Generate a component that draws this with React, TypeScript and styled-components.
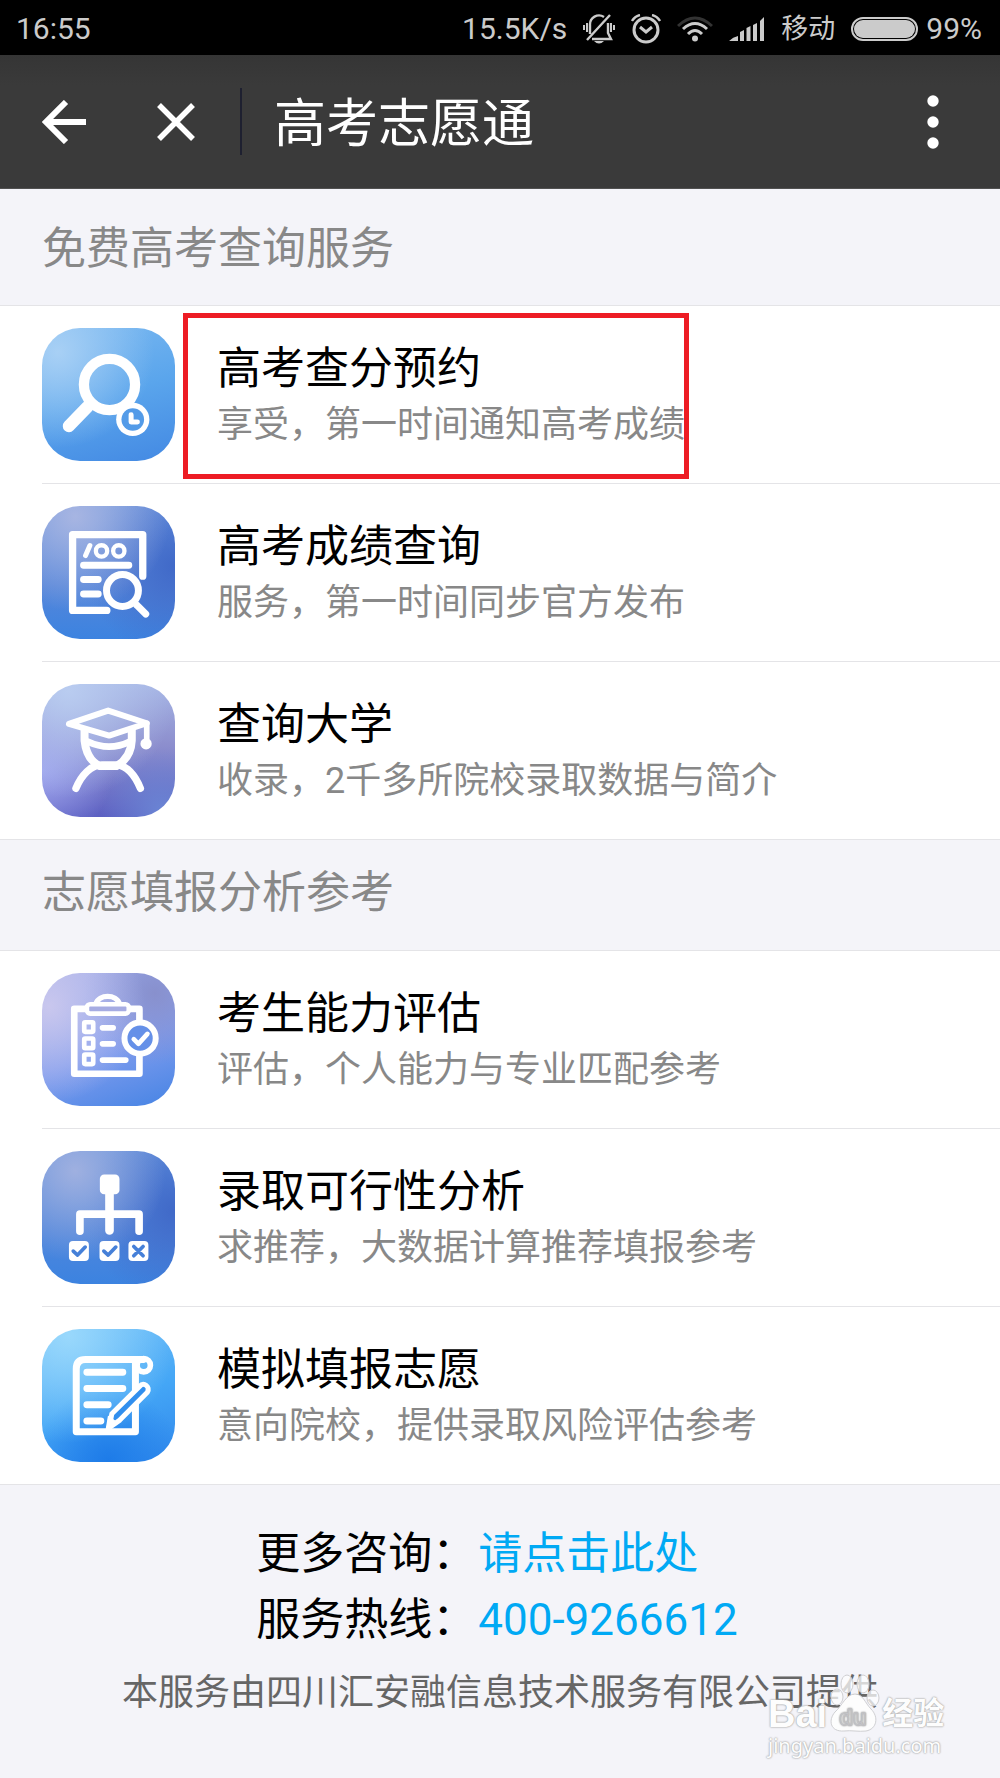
import React from 'react';
import styled, { createGlobalStyle } from 'styled-components';

const GlobalStyle = createGlobalStyle`
  *, *::before, *::after { box-sizing: border-box; }
  body {
    margin: 0;
    background: #f4f4f9;
    color: #000;
    font-family: Roboto, "Noto Sans CJK SC", sans-serif;
  }
  a { color: inherit; text-decoration: none; }
`;

const Page = styled.div`
  position: relative;
  min-height: 100vh;
`;

/* ---------- status bar ---------- */

const StatusBar = styled.div`
  display: flex;
  align-items: center;
  justify-content: space-between;
  height: 55px;
  padding: 2px 18px 0 16px;
  background: #000;
  color: #cbcbcb;
  font-size: 30px;
  line-height: 40px;
`;

const StatusGroup = styled.div`
  display: flex;
  align-items: center;
  gap: 16px;
  svg { display: block; }
`;

const Carrier = styled.span`
  font-size: 27px;
`;

const Battery = styled.div`
  display: flex;
  align-items: center;
  gap: 8px;
`;

const BatteryShell = styled.span`
  width: 67px;
  height: 24px;
  padding: 1px;
  border: 2px solid #cbcbcb;
  border-radius: 12px;
`;

const BatteryLevel = styled.span`
  display: block;
  height: 100%;
  border-radius: 9px;
  background: #cbcbcb;
`;

/* ---------- title bar ---------- */

const TitleBar = styled.header`
  display: flex;
  align-items: center;
  height: 134px;
  padding: 0 42px;
  background: linear-gradient(#353535, #3a3a3a 30px);
  border-bottom: 1px solid #515151;
  color: #fff;
`;

const IconButton = styled.button<{ $space?: number }>`
  display: flex;
  padding: 0;
  margin-right: ${(p) => p.$space ?? 0}px;
  border: 0;
  background: none;
  color: inherit;
  cursor: pointer;
`;

const Divider = styled.span`
  width: 2px;
  height: 67px;
  margin-right: 32px;
  background: #1e2030;
`;

const PageTitle = styled.h1`
  flex: 1;
  margin: 0;
  padding-top: 6px;
  font-size: 52px;
  line-height: 72px;
  font-weight: 400;
`;

/* ---------- lists ---------- */

const SectionTitle = styled.h2<{ $top: number; $bottom: number }>`
  margin: 0;
  padding: ${(p) => p.$top}px 42px ${(p) => p.$bottom}px;
  border-bottom: 1px solid #e4e4e7;
  color: #888;
  font-size: 44px;
  line-height: 60px;
  font-weight: 400;
`;

const List = styled.ul`
  margin: 0;
  padding: 0 0 0 42px;
  list-style: none;
  background: #fff;
  border-bottom: 1px solid #e4e4e7;
`;

const Item = styled.li`
  position: relative;
  & + & { border-top: 1px solid #e4e4e7; }
`;

const ItemLink = styled.a`
  display: flex;
  align-items: center;
  gap: 42px;
  padding: 22px 0;
`;

const Tile = styled.span<{ $bg: string }>`
  flex: none;
  width: 133px;
  height: 133px;
  border-radius: 38px;
  background: ${(p) => p.$bg};
  svg { display: block; width: 100%; height: 100%; }
`;

const ItemText = styled.span`
  display: flex;
  flex-direction: column;
`;

const ItemTitle = styled.span`
  font-size: 44px;
  line-height: 60px;
`;

const ItemNote = styled.span`
  color: #888;
  font-size: 36px;
  line-height: 52px;
`;

const Highlight = styled.span`
  position: absolute;
  top: 7px;
  left: 141px;
  width: 506px;
  height: 166px;
  border: 5px solid #ed1c24;
  pointer-events: none;
`;

/* ---------- footer ---------- */

const Footer = styled.footer`
  display: flex;
  flex-direction: column;
  align-items: center;
  padding: 36px 0 52px;
`;

const Contacts = styled.dl`
  display: grid;
  grid-template-columns: auto auto;
  column-gap: 2px;
  margin: 0;
  padding-right: 6px;
  font-size: 44px;
  line-height: 66px;
  dd { margin: 0; color: #00a9f4; }
`;

const Provider = styled.p`
  margin: 12px 0 0;
  color: #666;
  font-size: 36px;
  line-height: 56px;
`;

const Watermark = styled.div`
  position: absolute;
  right: 52px;
  bottom: 18px;
  width: 180px;
  color: #fdfdfd;
  text-shadow: 0 0 2px #aaa, 0 0 2px #bbb, 0 0 1px #bbb;
  pointer-events: none;
`;

const Brand = styled.div`
  display: flex;
  align-items: flex-end;
  height: 60px;
  line-height: 36px;
  font-weight: 700;
  font-size: 38px;
  svg { display: block; margin: 0 2px 0 3px; }
`;

const BrandLatin = styled.span`
  font-family: "Liberation Sans", sans-serif;
`;

const BrandHan = styled.span`
  font-size: 31px;
`;

const BrandSite = styled.div`
  font-family: "Noto Sans", sans-serif;
  font-size: 20px;
  line-height: 28px;
`;

/* ---------- glyphs ---------- */

const white = {
  fill: 'none',
  stroke: '#fff',
  strokeLinecap: 'round' as const,
  strokeLinejoin: 'round' as const,
};

const Mute = () => (
  <svg width="32" height="30" viewBox="0 0 32 30" fill="none" stroke="#cbcbcb" strokeWidth="2.400" aria-hidden="true">
    <path d="M7 20V11a9 9 0 0 1 14-8M25 9v10l3 6H9M27 1 4 26" />
    <path d="M4 9v9M1 11v5M28 9v9M31 11v5" strokeWidth="2" />
    <path d="M11 27h10q-5 5-10 0z" fill="#cbcbcb" stroke="none" />
  </svg>
);

const Alarm = () => (
  <svg width="30" height="30" viewBox="0 0 30 30" fill="none" stroke="#cbcbcb" strokeWidth="3" aria-hidden="true">
    <circle cx="15" cy="16" r="12" />
    <path d="m9 13 6 5 6-5" />
    <path d="M1 7q3-5 8-6M29 7q-3-5-8-6" strokeWidth="2.4" />
  </svg>
);

const Wifi = () => (
  <svg width="36" height="26" viewBox="0 0 36 26" fill="none" stroke="#cbcbcb" strokeWidth="3" aria-hidden="true">
    <path d="M1 10Q18-6 35 10" stroke="#333" />
    <path d="M6 13q12-11 24 0M11 18q7-7 14 0" />
    <circle cx="18" cy="22.5" r="3" fill="#cbcbcb" stroke="none" />
  </svg>
);

const Signal = () => (
  <svg width="36" height="24" viewBox="0 0 36 24" fill="#cbcbcb" aria-hidden="true">
    <path d="M0 24q4-4 9-5v5zM11 24v-9l4-2v11zM17.500 24V11l4-2v15zM24 24V8l4-2v18zM31 24V4l4-4v24z" />
  </svg>
);

const Back = () => (
  <svg width="45" height="44" viewBox="0 0 45 44" fill="none" stroke="#fff" strokeWidth="6" aria-hidden="true">
    <path d="M24 2 4 22l20 20M5 22h39" />
  </svg>
);

const Close = () => (
  <svg width="38" height="38" viewBox="0 0 38 38" fill="none" stroke="#fff" strokeWidth="5.500" aria-hidden="true">
    <path d="m2 2 34 34M36 2 2 36" />
  </svg>
);

const More = () => (
  <svg width="50" height="54" viewBox="0 0 50 54" fill="#fff" aria-hidden="true">
    <circle cx="25" cy="6" r="5.700" />
    <circle cx="25" cy="27" r="5.700" />
    <circle cx="25" cy="48" r="5.700" />
  </svg>
);

const SearchClock = () => (
  <svg viewBox="35 53 400 400" {...white} aria-hidden="true">
    <circle cx="238" cy="223" r="77" strokeWidth="31" />
    <path d="m172 290-56 58" strokeWidth="37" />
    <circle cx="308" cy="328" r="50" fill="#fff" stroke="none" />
    <circle cx="308" cy="328" r="34" fill="#539be8" stroke="none" />
    <path d="M303 314v22h19" strokeWidth="15" />
  </svg>
);

const ScoreSheet = () => (
  <svg viewBox="35 47 400 400" {...white} aria-hidden="true">
    <path d="M338 258V133H127v228h103" strokeWidth="22" />
    <path d="m179 166-13 30" strokeWidth="15" />
    <circle cx="214" cy="182" r="17" strokeWidth="13" />
    <circle cx="266" cy="182" r="17" strokeWidth="13" />
    <path d="M160 225h136M160 268h44M160 312h44" strokeWidth="21" />
    <circle cx="277" cy="301" r="48" strokeWidth="21" />
    <path d="m319 344 28 28" strokeWidth="21" />
  </svg>
);

const Graduate = () => (
  <svg viewBox="35 40 400 400" {...white} aria-hidden="true">
    <path d="m116 160 118-40 116 38-113 37z" strokeWidth="18" />
    <path d="M350 158v55" strokeWidth="17" />
    <circle cx="348" cy="220" r="17" fill="#fff" stroke="none" />
    <path d="M163 178v32c4 40 22 65 46 77h50c28-16 44-40 46-77v-32" strokeWidth="24" />
    <path d="M172 213q65 31 128 0" strokeWidth="20" />
    <path d="M137 354c16-40 46-71 78-71h42c32 0 58 31 74 71" strokeWidth="22" />
  </svg>
);

const Checklist = () => (
  <svg viewBox="35 37 400 400" {...white} aria-hidden="true">
    <path d="M328 190v-45H132v195h196v-60" strokeWidth="20" />
    <path d="M197 130c9-30 62-30 71 0" strokeWidth="16" />
    <rect x="170" y="131" width="126" height="28" rx="10" fill="#a6ace2" strokeWidth="14" />
    <rect x="162" y="185" width="27" height="29" rx="3" strokeWidth="14" />
    <rect x="162" y="234" width="27" height="29" rx="3" strokeWidth="14" />
    <rect x="162" y="282" width="27" height="29" rx="3" strokeWidth="14" />
    <path d="M217 202h32M217 250h32M217 299h70" strokeWidth="17" />
    <circle cx="330" cy="233" r="47" fill="#6590e8" strokeWidth="18" />
    <path d="m311 236 14 14 27-30" strokeWidth="14" />
  </svg>
);

const Tree = () => (
  <svg viewBox="35 30 400 400" {...white} aria-hidden="true">
    <rect x="209" y="101" width="59" height="59" rx="13" fill="#fff" stroke="none" />
    <path d="M238 150v119" strokeWidth="26" />
    <path d="M149 271v-51h178v51" strokeWidth="23" />
    <rect x="116" y="301" width="60" height="60" rx="12" fill="#fff" stroke="none" />
    <rect x="208" y="301" width="60" height="60" rx="12" fill="#fff" stroke="none" />
    <rect x="295" y="301" width="60" height="60" rx="12" fill="#fff" stroke="none" />
    <path d="m129 331 13 12 23-24M221 331l13 12 23-24M311 317l28 28M339 317l-28 28" stroke="#4680d8" strokeWidth="11" />
  </svg>
);

const Form = () => (
  <svg viewBox="35 38 400 400" {...white} aria-hidden="true">
    <path d="M340 130H166q-28 0-28 28v189h178V140" strokeWidth="21" />
    <circle cx="341" cy="147" r="20" strokeWidth="17" />
    <path d="M170 168h108M170 217h108M170 266h64M170 315h42" strokeWidth="21" />
    <path d="m237 335 8-42 85-84c10-13 32 3 22 19l-83 84z" fill="#318fee" strokeWidth="15" />
    <path d="m228 341 7-40 27 20z" fill="#fff" strokeWidth="4" />
  </svg>
);

const Paw = () => (
  <svg width="50" height="58" viewBox="0 0 50 58" fill="#fdfdfd" stroke="#cfcfd2" strokeWidth="1" aria-hidden="true">
    <ellipse cx="7" cy="23" rx="6" ry="8" fillOpacity="0.75" />
    <ellipse cx="17" cy="10" rx="6" ry="9" fillOpacity="0.75" />
    <ellipse cx="33" cy="10" rx="6" ry="9" fillOpacity="0.75" />
    <ellipse cx="43" cy="24" rx="6" ry="8" fillOpacity="0.75" />
    <path d="M25 20c8 0 10 9 16 15 8 8 6 20-5 22-7 1-15-1-22 0C0 58-2 46 5 38c7-6 11-18 20-18z" />
    <text x="23" y="51" textAnchor="middle" fontFamily="Liberation Sans, sans-serif" fontWeight="700" fontSize="22" fill="#fdfdfd" stroke="#c4c4c8">du</text>
  </svg>
);

/* ---------- data ---------- */

interface Entry {
  title: string;
  note: string;
  bg: string;
  Icon: React.FC;
  marked?: boolean;
}

const queryServices: Entry[] = [
  {
    title: '高考查分预约',
    note: '享受，第一时间通知高考成绩',
    bg: 'radial-gradient(circle at 12% 18%, #a8d0f5 0, rgba(168,208,245,0) 60%), linear-gradient(165deg, #7ab8f0, #5aa5ec 50%, #4389e3)',
    Icon: SearchClock,
    marked: true,
  },
  {
    title: '高考成绩查询',
    note: '服务，第一时间同步官方发布',
    bg: 'radial-gradient(circle at 25% 8%, #a7b5e2 0, rgba(150,170,225,0) 60%), radial-gradient(circle at 100% 45%, #4069c8 0, rgba(64,105,200,0) 60%), linear-gradient(#6d96de, #5586da 60%, #3c83e0)',
    Icon: ScoreSheet,
  },
  {
    title: '查询大学',
    note: '收录，2千多所院校录取数据与简介',
    bg: 'radial-gradient(circle at 20% 5%, #b9ccf0 0, rgba(185,204,240,0) 65%), radial-gradient(circle at 0 65%, #9da3ee 0, rgba(157,163,238,0) 45%), radial-gradient(circle at 90% 95%, #6a84d4 0, rgba(106,132,212,0) 35%), linear-gradient(#a5b4e4, #8d8fce 45%, #5c60c2)',
    Icon: Graduate,
  },
];

const planServices: Entry[] = [
  {
    title: '考生能力评估',
    note: '评估，个人能力与专业匹配参考',
    bg: 'radial-gradient(circle at 5% 25%, #c9c7ee 0, rgba(201,199,238,0) 60%), radial-gradient(circle at 85% 15%, #8890cd 0, rgba(136,144,205,0) 45%), linear-gradient(160deg, #aab2e8, #7f9cee 55%, #4684e4)',
    Icon: Checklist,
  },
  {
    title: '录取可行性分析',
    note: '求推荐，大数据计算推荐填报参考',
    bg: 'radial-gradient(circle at 25% 15%, #9fb0e0 0, rgba(150,170,225,0) 60%), radial-gradient(circle at 100% 45%, #4069c8 0, rgba(64,105,200,0) 60%), linear-gradient(#6391dc, #4f86dc 60%, #3c83e0)',
    Icon: Tree,
  },
  {
    title: '模拟填报志愿',
    note: '意向院校，提供录取风险评估参考',
    bg: 'radial-gradient(circle at 20% 5%, #99d8fc 0, rgba(153,216,252,0) 65%), radial-gradient(circle at 50% 100%, #1d7be8 0, rgba(29,123,232,0) 50%), linear-gradient(160deg, #6fbff8, #44a6f6 55%, #3088ec)',
    Icon: Form,
  },
];

const ServiceList = ({ entries }: { entries: Entry[] }) => (
  <List>
    {entries.map(({ title, note, bg, Icon, marked }) => (
      <Item key={title}>
        <ItemLink href="#">
          <Tile $bg={bg}>
            <Icon />
          </Tile>
          <ItemText>
            <ItemTitle>{title}</ItemTitle>
            <ItemNote>{note}</ItemNote>
          </ItemText>
        </ItemLink>
        {marked && <Highlight />}
      </Item>
    ))}
  </List>
);

export default function App() {
  return (
    <Page lang="zh-CN">
      <GlobalStyle />
      <StatusBar>
        <span>16:55</span>
        <StatusGroup>
          <span>15.5K/s</span>
          <Mute />
          <Alarm />
          <Wifi />
          <Signal />
          <Carrier>移动</Carrier>
          <Battery>
            <BatteryShell>
              <BatteryLevel />
            </BatteryShell>
            <span>99%</span>
          </Battery>
        </StatusGroup>
      </StatusBar>
      <TitleBar>
        <IconButton type="button" aria-label="返回" $space={70}>
          <Back />
        </IconButton>
        <IconButton type="button" aria-label="关闭" $space={45}>
          <Close />
        </IconButton>
        <Divider />
        <PageTitle>高考志愿通</PageTitle>
        <IconButton type="button" aria-label="更多">
          <More />
        </IconButton>
      </TitleBar>
      <main>
        <SectionTitle $top={30} $bottom={26}>免费高考查询服务</SectionTitle>
        <ServiceList entries={queryServices} />
        <SectionTitle $top={23} $bottom={27}>志愿填报分析参考</SectionTitle>
        <ServiceList entries={planServices} />
      </main>
      <Footer>
        <Contacts>
          <dt>更多咨询：</dt>
          <dd>
            <a href="#">请点击此处</a>
          </dd>
          <dt>服务热线：</dt>
          <dd>
            <a href="tel:400-9266612">400-9266612</a>
          </dd>
        </Contacts>
        <Provider>本服务由四川汇安融信息技术服务有限公司提供</Provider>
      </Footer>
      <Watermark>
        <Brand>
          <BrandLatin>Bai</BrandLatin>
          <Paw />
          <BrandHan>经验</BrandHan>
        </Brand>
        <BrandSite>jingyan.baidu.com</BrandSite>
      </Watermark>
    </Page>
  );
}
